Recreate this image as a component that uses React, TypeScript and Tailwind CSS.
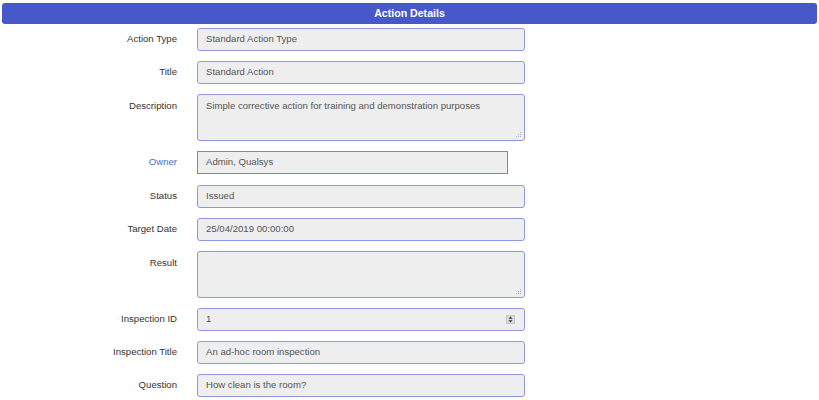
import React from "react";

const font = { fontFamily: '"Liberation Sans", Arial, sans-serif' };

function Grip() {
  return (
    <svg className="absolute right-[2px] bottom-[2px]" width="7" height="7" viewBox="0 0 7 7">
      <rect x="5" y="1" width="1" height="1" fill="#b5b5b5" />
      <rect x="3" y="3" width="1" height="1" fill="#b5b5b5" />
      <rect x="5" y="3" width="1" height="1" fill="#b5b5b5" />
      <rect x="1" y="5" width="1" height="1" fill="#b5b5b5" />
      <rect x="3" y="5" width="1" height="1" fill="#b5b5b5" />
      <rect x="5" y="5" width="1" height="1" fill="#b5b5b5" />
    </svg>
  );
}

function Spinner() {
  return (
    <div className="absolute right-[9px] top-[6px] w-[9px] h-[9px] bg-[#d9d9d9] border border-[#c8c8c8] flex items-center justify-center">
      <svg width="5" height="7" viewBox="0 0 5 7">
        <path d="M2.5 0.5 L4.5 2.8 L0.5 2.8 Z" fill="#333" />
        <path d="M2.5 6.5 L4.5 4.2 L0.5 4.2 Z" fill="#333" />
      </svg>
    </div>
  );
}

type Row = {
  label: string;
  value: string;
  kind?: "text" | "area" | "owner" | "number";
};

const rows: Row[] = [
  { label: "Action Type", value: "Standard Action Type" },
  { label: "Title", value: "Standard Action" },
  { label: "Description", value: "Simple corrective action for training and demonstration purposes", kind: "area" },
  { label: "Owner", value: "Admin, Qualsys", kind: "owner" },
  { label: "Status", value: "Issued" },
  { label: "Target Date", value: "25/04/2019 00:00:00" },
  { label: "Result", value: "", kind: "area" },
  { label: "Inspection ID", value: "1", kind: "number" },
  { label: "Inspection Title", value: "An ad-hoc room inspection" },
  { label: "Question", value: "How clean is the room?" },
];

function Field({ row }: { row: Row }) {
  const kind = row.kind ?? "text";
  if (kind === "area") {
    return (
      <div className="flex mb-[10px]">
        <div className="w-[177px] shrink-0 text-right text-[9.6px] text-[#333] pt-[6px] leading-[12px]">{row.label}</div>
        <div className="relative ml-[20px] w-[328px] h-[47px] rounded-[3px] border border-[#8a99e2] bg-[#eeeeee] px-[8px] pt-[5px] text-[9.6px] leading-[12px] text-[#555]">
          {row.value}
          <Grip />
        </div>
      </div>
    );
  }
  if (kind === "owner") {
    return (
      <div className="flex items-center mb-[11px]">
        <div className="w-[177px] shrink-0 text-right text-[9.6px] text-[#3a7bc0]">{row.label}</div>
        <div className="ml-[20px] w-[311px] h-[23px] border border-[#7c86b8] bg-[#eeeeee] px-[8px] flex items-center text-[9.6px] text-[#555]">
          {row.value}
        </div>
      </div>
    );
  }
  return (
    <div className="flex items-center mb-[10px]">
      <div className="w-[177px] shrink-0 text-right text-[9.6px] text-[#333]">{row.label}</div>
      <div className="relative ml-[20px] w-[328px] h-[23px] rounded-[3px] border border-[#8a99e2] bg-[#eeeeee] px-[8px] flex items-center text-[9.6px] text-[#555]">
        {row.value}
        {kind === "number" && <Spinner />}
      </div>
    </div>
  );
}

export default function App() {
  return (
    <div className="w-[819px] h-[400px] bg-white overflow-hidden" style={font}>
      <div className="mx-[2px] mt-[3px] h-[21px] rounded-[3px] bg-[#4759c8] flex items-center justify-center text-white font-bold text-[10.6px]">
        Action Details
      </div>
      <div className="mt-[4px]">
        {rows.map((r) => (
          <Field key={r.label} row={r} />
        ))}
      </div>
    </div>
  );
}
